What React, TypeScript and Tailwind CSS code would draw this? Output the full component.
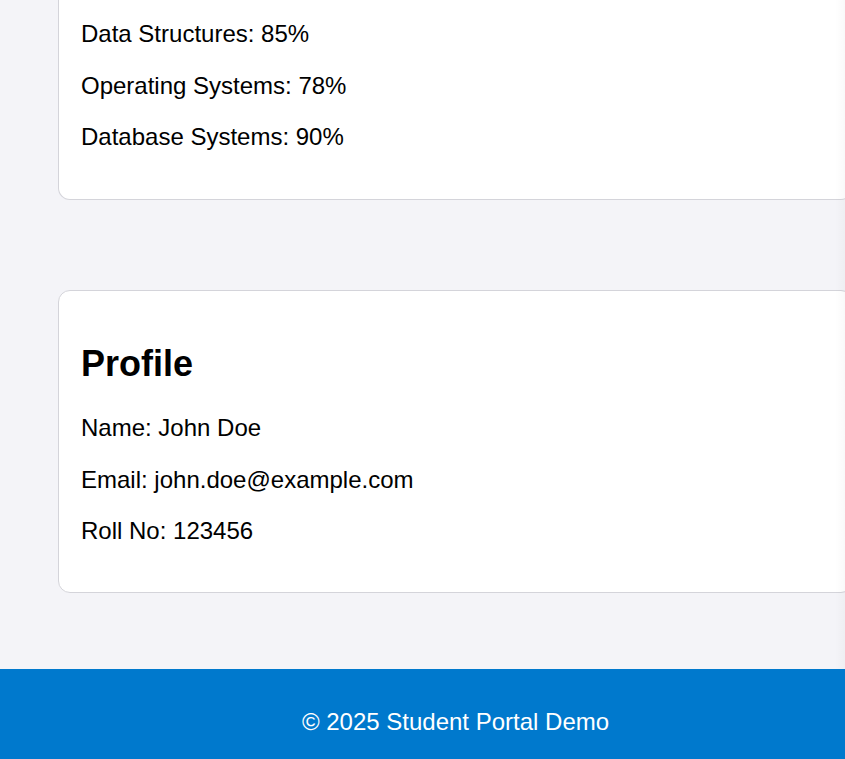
export default function App() {
  const font = { fontFamily: '"Liberation Sans", Arial, sans-serif' };
  return (
    <div className="relative w-[845px] h-[759px] overflow-hidden bg-[#f4f4f8] text-black" style={font}>
      <div className="w-[911px] flex flex-col">
        <div className="px-[58px] flex flex-col gap-[90px] -mt-[24px]">
          <section className="bg-white border border-[#d4d4da] rounded-b-[12px] border-t-0 px-[22px] pt-[20px] pb-[24px] text-[24px] leading-[27.6px]">
            <p className="my-[24px]">Data Structures: 85%</p>
            <p className="my-[24px]">Operating Systems: 78%</p>
            <p className="my-[24px]">Database Systems: 90%</p>
          </section>
          <section className="bg-white border border-[#d4d4da] rounded-[12px] px-[22px] pt-[22px] pb-[23px] text-[24px] leading-[27.6px]">
            <h2 className="mt-[30px] mb-[30px] text-[36px] leading-[41.4px] font-bold">Profile</h2>
            <p className="my-[24px]">Name: John Doe</p>
            <p className="my-[24px]">Email: john.doe@example.com</p>
            <p className="my-[24px]">Roll No: 123456</p>
          </section>
        </div>
        <footer className="mt-[76px] bg-[#0079cd] text-white text-center text-[24px] leading-[27.6px] pt-[39px] pb-[26px]">
          © 2025 Student Portal Demo
        </footer>
      </div>
      <div className="absolute top-0 right-0 h-[669px] w-[10px] bg-gradient-to-r from-transparent to-[rgba(0,0,0,0.025)]" />
    </div>
  );
}
